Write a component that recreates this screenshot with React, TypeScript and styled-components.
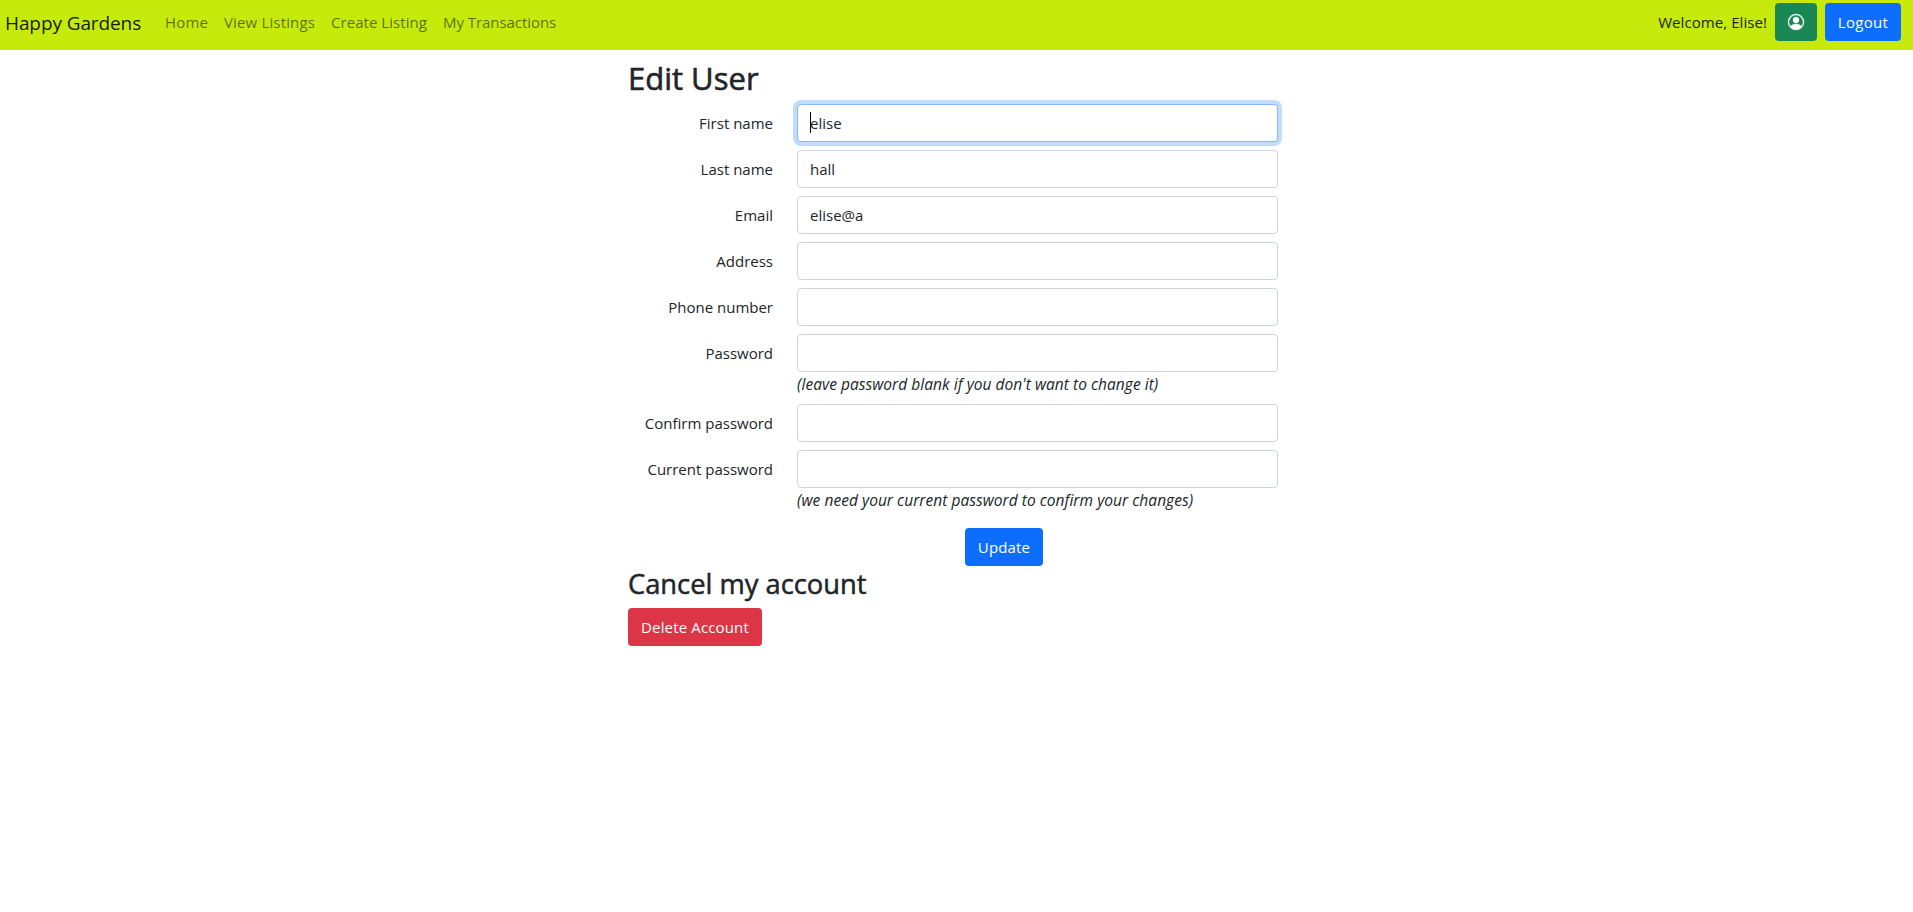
import React from "react";
import styled, { createGlobalStyle } from "styled-components";
import { BsPersonCircle } from "react-icons/bs";

const GlobalStyle = createGlobalStyle`
  *, *::before, *::after { box-sizing: border-box; }
  body {
    margin: 0;
    background: #fff;
    color: #212529;
    font-family: "Segoe UI", "Open Sans", "Noto Sans", sans-serif;
    font-size: 15px;
    line-height: 24px;
  }
`;

const Navbar = styled.nav`
  display: flex;
  align-items: flex-start;
  height: 50px;
  padding: 3px 12px 0 5px;
  background: #c6ea0c;
  white-space: nowrap;
`;

const Brand = styled.a`
  width: 160px;
  padding: 5px 0;
  color: rgba(0, 0, 0, 0.9);
  font-size: 19px;
  line-height: 30px;
  letter-spacing: -0.1px;
  text-decoration: none;
`;

const NavLinks = styled.div`
  display: flex;
  gap: 16px;
  padding: 7px 0;
`;

const NavLink = styled.a<{ $tracking?: number }>`
  color: rgba(0, 0, 0, 0.55);
  letter-spacing: ${(p) => p.$tracking ?? 0}px;
  text-decoration: none;
`;

const Account = styled.div`
  display: flex;
  align-items: center;
  gap: 8px;
  margin-left: auto;
`;

const Greeting = styled.span`
  letter-spacing: 0.07px;
`;

const ProfileIcon = styled(BsPersonCircle)`
  width: 16px;
  height: 16px;
  overflow: visible;
  stroke-width: 0.35px;
`;

const tones = { primary: "#0d6efd", success: "#198754", danger: "#dc3545" };

const Button = styled.button<{ $tone: keyof typeof tones; $width: number; $tracking?: number }>`
  display: inline-flex;
  align-items: center;
  justify-content: center;
  width: ${(p) => p.$width}px;
  height: 38px;
  padding: 0;
  border: 0;
  border-radius: 4px;
  background: ${(p) => tones[p.$tone]};
  color: #fff;
  font: inherit;
  letter-spacing: ${(p) => p.$tracking ?? 0}px;
  white-space: nowrap;
`;

const Page = styled.main`
  width: 650px;
  margin: 0 0 0 628px;
  padding-top: 9px;
`;

const Title = styled.h1`
  margin: 0 0 7px;
  font-size: 31px;
  font-weight: 500;
  line-height: 38px;
  -webkit-text-stroke: 0.6px currentColor;
`;

const Subtitle = styled.h2`
  margin: 0;
  padding-top: 1px;
  font-size: 27.3px;
  font-weight: 500;
  line-height: 34px;
  -webkit-text-stroke: 0.5px currentColor;
`;

const Form = styled.form`
  display: flex;
  flex-direction: column;
  gap: 8px;
`;

const Row = styled.div`
  display: grid;
  grid-template-columns: 145px 481px;
  column-gap: 24px;
`;

const Label = styled.label`
  padding: 7px 0;
  text-align: right;
`;

const Control = styled.div`
  position: relative;
`;

const Input = styled.input<{ $active?: boolean }>`
  display: block;
  width: 100%;
  height: 38px;
  padding: 6px 12px;
  border: 1px solid ${(p) => (p.$active ? "#86b7fe" : "#ced4da")};
  border-radius: 4px;
  outline: 0;
  background: #fff;
  box-shadow: ${(p) => (p.$active ? "0 0 0 4px rgba(13, 110, 253, 0.25)" : "none")};
  color: #212529;
  font: inherit;
`;

const Caret = styled.span`
  position: absolute;
  top: 8px;
  left: 13px;
  width: 1px;
  height: 21px;
  background: #000;
`;

const Hint = styled.em`
  display: block;
  font-size: 15.5px;
  letter-spacing: 0.04px;
  white-space: nowrap;
`;

const Actions = styled.div`
  display: flex;
  margin-top: 8px;
  padding-left: 337px;
`;

const DangerZone = styled.section`
  display: flex;
  flex-direction: column;
  align-items: flex-start;
  gap: 7px;
`;

const fields = [
  { label: "First name", value: "elise", active: true },
  { label: "Last name", value: "hall" },
  { label: "Email", value: "elise@a" },
  { label: "Address" },
  { label: "Phone number" },
  { label: "Password", type: "password", hint: "(leave password blank if you don't want to change it)" },
  { label: "Confirm password", type: "password" },
  { label: "Current password", type: "password", hint: "(we need your current password to confirm your changes)" },
];

export default function App() {
  return (
    <>
      <GlobalStyle />
      <Navbar>
        <Brand>Happy Gardens</Brand>
        <NavLinks>
          <NavLink $tracking={0.15}>Home</NavLink>
          <NavLink $tracking={0.15}>View Listings</NavLink>
          <NavLink $tracking={0.05}>Create Listing</NavLink>
          <NavLink $tracking={-0.05}>My Transactions</NavLink>
        </NavLinks>
        <Account>
          <Greeting>Welcome, Elise!</Greeting>
          <Button $tone="success" $width={42} aria-label="Profile">
            <ProfileIcon stroke="currentColor" />
          </Button>
          <Button $tone="primary" $width={76} $tracking={0.3}>Logout</Button>
        </Account>
      </Navbar>
      <Page>
        <Title>Edit User</Title>
        <Form>
          {fields.map((f) => (
            <Row key={f.label}>
              <Label>{f.label}</Label>
              <Control>
                <Input $active={f.active} type={f.type ?? "text"} defaultValue={f.value} />
                {f.active && <Caret />}
                {f.hint && <Hint>{f.hint}</Hint>}
              </Control>
            </Row>
          ))}
          <Actions>
            <Button $tone="primary" $width={78} $tracking={0.15} type="button">Update</Button>
          </Actions>
        </Form>
        <DangerZone>
          <Subtitle>Cancel my account</Subtitle>
          <Button $tone="danger" $width={134} $tracking={0.15}>Delete Account</Button>
        </DangerZone>
      </Page>
    </>
  );
}
